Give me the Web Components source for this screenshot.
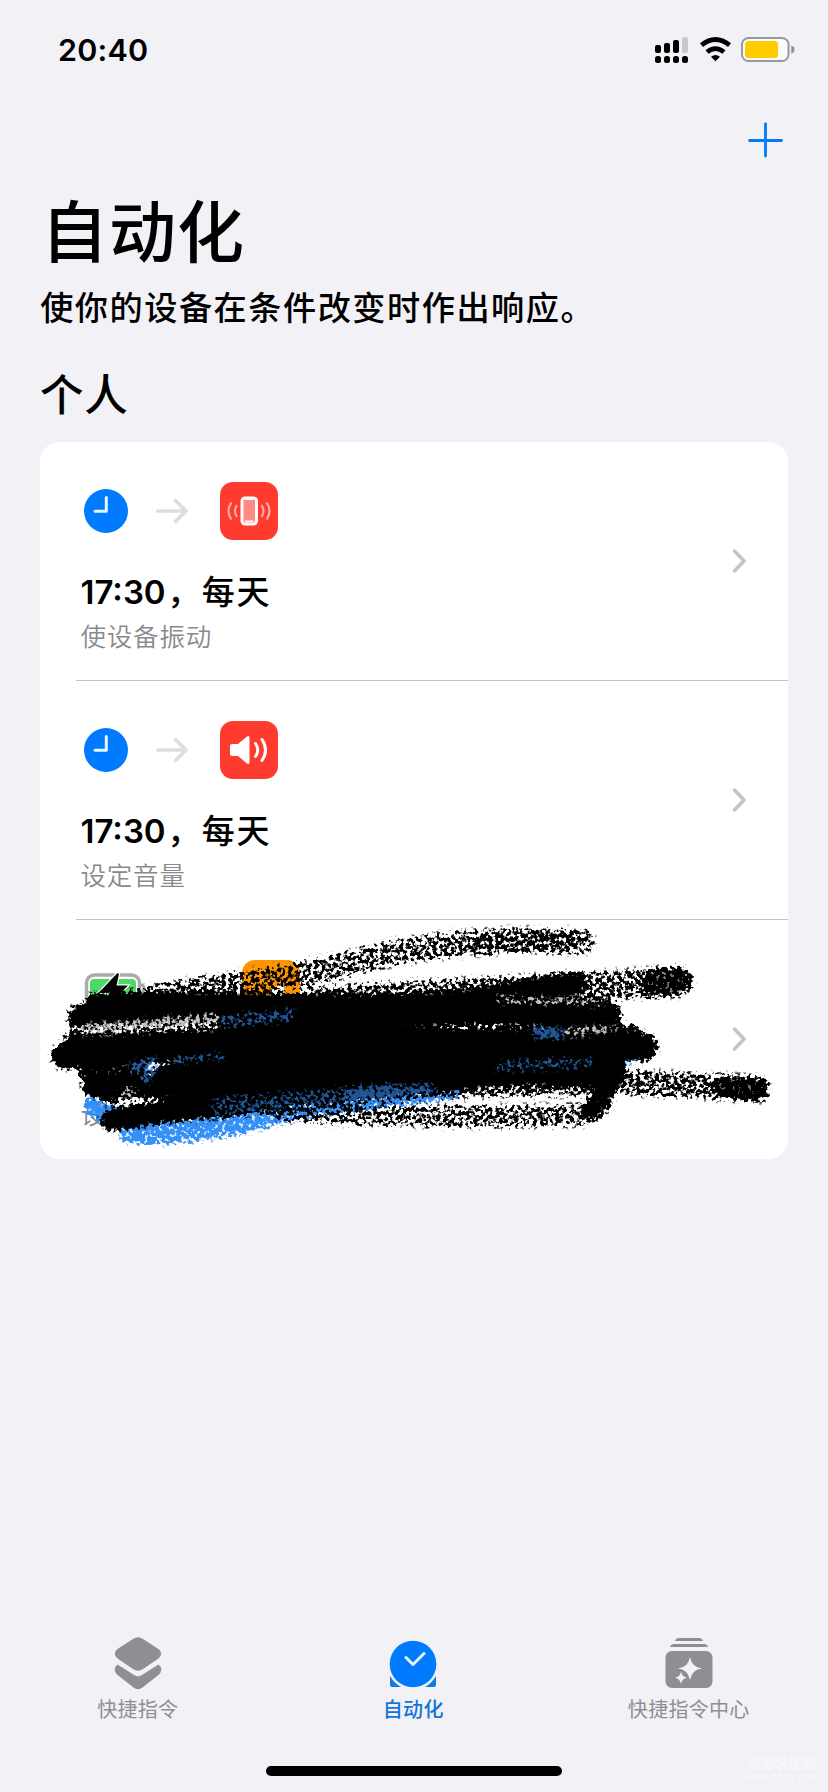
<!DOCTYPE html>
<html lang="zh-CN">
<head>
<meta charset="utf-8">
<title>自动化</title>
<style>
body{margin:0;background:#f1f1f6}
</style>
</head>
<body>
<shortcuts-screen></shortcuts-screen>
<script>
function define(name, html){
  const template=document.createElement('template');
  template.innerHTML=html;
  customElements.define(name,class extends HTMLElement{
    constructor(){super();this.attachShadow({mode:'open'}).append(template.content.cloneNode(true));}
  });
}

define('status-bar',`
<style>
:host{display:flex;height:98px;box-sizing:border-box;padding:0 33px 0 58px;align-items:center;justify-content:space-between}
time{font:600 30.5px/36px Inter,sans-serif;letter-spacing:.2px;margin-top:1px}
svg{display:block;width:142px;height:30px}
</style>
<time>20:40</time>
<svg viewBox="653 34 142 30">
  <g fill="#000"><rect x="655" y="45" width="6" height="8" rx="2"/><rect x="664" y="43" width="6" height="10" rx="2"/><rect x="673" y="40" width="6" height="13" rx="2"/>
  <rect x="655" y="56" width="6" height="7" rx="2.5"/><rect x="664" y="56" width="6" height="7" rx="2.5"/><rect x="673" y="56" width="6" height="7" rx="2.5"/><rect x="682" y="56" width="6" height="7" rx="2.5"/></g>
  <rect x="682" y="37" width="6" height="16" rx="2" fill="#c8c8cc"/>
  <path d="M701.5 45.200Q715.5 33.800 729.5 45.200M707 52Q715.5 45.200 724 52" fill="none" stroke="#000" stroke-width="4.800"/>
  <path d="M711 56.700Q715.5 53.200 720 56.700L715.5 61.200Z"/>
  <rect x="742" y="38" width="46.500" height="23" rx="6.500" fill="#fbfbfd" stroke="#98989d" stroke-width="2"/>
  <rect x="745" y="41" width="33" height="17" rx="3.500" fill="#fc0"/>
  <path d="M791.300 45.500Q794.500 46.500 794.500 49.500T791.300 53.500Z" fill="#8e8e93"/>
</svg>`);

define('nav-bar',`
<style>
:host{display:flex;height:84px;box-sizing:border-box;padding:24px 44px 0;justify-content:flex-end}
svg{width:36px;height:36px;display:block}
</style>
<svg viewBox="0 0 36 36"><path d="M17.500 1.800V34M1.500 18.500H33.500" stroke="#007aff" stroke-width="2.800" stroke-linecap="round"/></svg>`);

define('page-heading',`
<style>
:host{display:block;padding:0 40px;height:260px;box-sizing:border-box;font-family:"Noto Sans CJK SC",sans-serif;color:#000}
h1,h2,p{margin:0;font-weight:500;white-space:nowrap}
h1{font-size:67px;line-height:98px;letter-spacing:1px;padding-left:1px;margin-top:-3px}
p{font-size:33.200px;line-height:50px;letter-spacing:1.500px;padding:4px 0 0 .2px}
h2{font-size:43.500px;line-height:64px;padding-top:30px;letter-spacing:.8px}
</style>
<h1><slot name="title"></slot></h1><p><slot name="summary"></slot></p><h2><slot name="section"></slot></h2>`);

define('clock-icon',`
<style>:host{display:block;width:44px;height:44px}svg{display:block}</style>
<svg width="44" height="44"><circle cx="22" cy="22" r="22" fill="#007aff"/><path d="M22.300 8.500V22.300H11" fill="none" stroke="#e9f8ff" stroke-width="3" stroke-linecap="round" stroke-linejoin="round"/></svg>`);

define('arrow-icon',`
<style>:host{display:block;width:34px;height:28px}svg{display:block}</style>
<svg width="34" height="28"><path d="M3 14H31M20.500 3.500L31 14L20.500 24.500" fill="none" stroke="#dedede" stroke-width="3.700" stroke-linecap="round" stroke-linejoin="round"/></svg>`);

define('app-tile',`
<style>:host{display:block;width:58px;height:58px;border-radius:13px;background:var(--tile,#ff3b30)}</style><slot></slot>`);

define('automation-row',`
<style>
:host{display:flex;position:relative;height:239px;box-sizing:border-box;padding-left:36px}
.body{flex:1;display:flex;flex-direction:column;padding:39px 0 0 5px;border-bottom:1px solid var(--line,#c4c4c7);font-family:Inter,"Noto Sans CJK SC",sans-serif;box-sizing:border-box}
.flow{display:flex;height:60px;align-items:center;padding-left:3px}
.flow ::slotted(arrow-icon){margin-left:27px;margin-right:31px}
.name{display:flex;font-size:33px;line-height:46px;height:46px;font-weight:600;margin-top:28px;margin-left:-.5px;white-space:nowrap;font-family:Inter,"Noto Sans CJK SC",sans-serif}
.name ::slotted([slot=when]){font-weight:500;letter-spacing:1.700px;margin:-2px 0 0 1.500px;font-family:"Noto Sans CJK SC",sans-serif}
.detail{font-size:25.500px;line-height:36px;color:#8a8a8e;margin-top:2px;margin-left:-.5px;letter-spacing:.8px;font-weight:350;font-family:"Noto Sans CJK SC",sans-serif}
.chevron{align-self:center;width:20px;height:28px;margin-right:38px}
.end{display:flex;border-bottom:1px solid var(--line,#c4c4c7)}
</style>
<div class="body"><div class="flow"><slot name="flow"></slot></div><div class="name"><slot name="name"></slot><slot name="when"></slot></div><div class="detail"><slot name="detail"></slot></div></div>
<div class="end"><svg class="chevron" viewBox="0 0 20 28"><path d="M4.500 4L14 14L4.500 24" fill="none" stroke="#c4c4c6" stroke-width="3.500" stroke-linecap="round" stroke-linejoin="round"/></svg></div>
<slot name="overlay"></slot>`);

define('automation-card',`
<style>:host{display:block;margin:0 40px;height:717px;border-radius:20px;background:#fff;overflow:hidden}</style><slot></slot>`);

define('charging-icon',`
<style>:host{display:block;width:62px;height:36px;margin-right:96px}svg{display:block;position:relative;top:2px}</style>
<svg width="62" height="36"><rect x="2.500" y="2" width="53" height="32" rx="8" fill="#fff" stroke="#aaa" stroke-width="3.500"/><rect x="6" y="6" width="46" height="24" rx="4" fill="#4cd964"/><path d="M58 11Q62 15 58 20" fill="none" stroke="#aaa" stroke-width="3"/><path d="M33.500 0L15 19.500H26L22 34L44 12.500H32.500L35 1Z" fill="#000" stroke="#fff" stroke-width="2.500" paint-order="stroke"/></svg>`);

/* Chalky marker strokes: line opacity is the density of the grain. */
define('marker-scribble',`
<style>:host{display:block;position:absolute;inset:0}svg{display:block}</style>
<svg width="748" height="239" viewBox="40 919 748 239" fill="none" stroke-linecap="round" stroke-linejoin="round">
<defs>
<filter id="grain" filterUnits="userSpaceOnUse" x="40" y="919" width="748" height="239" color-interpolation-filters="sRGB">
<feGaussianBlur in="SourceGraphic" stdDeviation="2.400" result="soft"/>
<feTurbulence type="fractalNoise" baseFrequency=".27" numOctaves="2" seed="8"/>
<feColorMatrix values="0 0 0 0 0  0 0 0 0 0  0 0 0 0 0  2.8 0 0 0 -.9" result="noise"/>
<feComposite in="soft" in2="noise" operator="arithmetic" k2="4.100" k3="3" k4="-3" result="cut"/>
<feGaussianBlur in="cut" stdDeviation=".5" result="cut2"/>
<feFlood flood-color="#000"/><feComposite in2="cut2" operator="in"/>
</filter>
<filter id="blue" filterUnits="userSpaceOnUse" x="40" y="919" width="748" height="239" color-interpolation-filters="sRGB">
<feGaussianBlur in="SourceGraphic" stdDeviation="2.500" result="soft"/>
<feTurbulence type="fractalNoise" baseFrequency=".27" numOctaves="2" seed="21"/>
<feColorMatrix values="0 0 0 0 0  0 0 0 0 0  0 0 0 0 0  2.800 0 0 0 -.9" result="noise"/>
<feComposite in="soft" in2="noise" operator="arithmetic" k2="3.200" k3="2.500" k4="-2.500" result="cut"/>
<feGaussianBlur in="cut" stdDeviation=".5" result="cut2"/>
<feFlood flood-color="#348ff6"/><feComposite in2="cut2" operator="in"/>
</filter>
<filter id="light" filterUnits="userSpaceOnUse" x="40" y="919" width="748" height="239" color-interpolation-filters="sRGB">
<feGaussianBlur in="SourceGraphic" stdDeviation="2.500" result="soft"/>
<feTurbulence type="fractalNoise" baseFrequency=".27" numOctaves="2" seed="5"/>
<feColorMatrix values="0 0 0 0 0  0 0 0 0 0  0 0 0 0 0  2.800 0 0 0 -.9" result="noise"/>
<feComposite in="soft" in2="noise" operator="arithmetic" k2="3.300" k3="2.500" k4="-2.500" result="cut"/>
<feFlood flood-color="#fff"/><feComposite in2="cut" operator="in"/>
</filter>
</defs>
<g stroke="#000" filter="url(#blue)">
<path d="M92 1104Q102 1115 112 1112" stroke-width="17"/>
<path d="M131 1130C178 1134 230 1124 275 1112S370 1098 450 1086" stroke-width="25" stroke-opacity=".85"/>
<path d="M622 1058L640 1045" stroke-width="15"/>
</g>
<g stroke="#000" filter="url(#grain)">
<path d="M132 1002C190 986 260 984 340 965C390 951 420 946 480 941S550 942 582 940" stroke-width="25" stroke-opacity=".52"/>
<path d="M480 944C510 940 540 942 568 940" stroke-width="20" stroke-opacity=".25"/>
<path d="M310 1002C410 992 500 992 590 986S650 982 678 980" stroke-width="30" stroke-opacity=".55"/>
<path d="M655 982L678 980" stroke-width="27" stroke-opacity=".7"/>
<path d="M75 1031L180 1025Q350 1021 440 1013" stroke-width="22" stroke-opacity=".5"/>
<path d="M96 1002C170 1000 250 1002 355 1004" stroke-width="20"/>
<path d="M79 1015C180 1010 280 1008 390 1005S500 990 574 982" stroke-width="22"/>
<path d="M230 1022Q400 1005 608 1014" stroke-width="26"/>
<path d="M430 1001Q520 998 595 1006" stroke-width="20" stroke-opacity=".62"/>
<path d="M65 1055C200 1042 350 1038 480 1042S590 1044 644 1046" stroke-width="27"/>
<path d="M74 1043C180 1043 330 1030 470 1037L632 1034" stroke-width="21" stroke-opacity=".85"/>
<path d="M92 1073Q100 1060 138 1068L110 1091" stroke-width="25" stroke-opacity=".88"/>
<path d="M165 1077C280 1059 450 1055 612 1067" stroke-width="28"/>
<path d="M94 1085C210 1088 320 1086 450 1078Q550 1067 612 1078" stroke-width="23"/>
<path d="M112 1119C150 1110 210 1107 280 1098" stroke-width="23"/>
<path d="M185 1080Q250 1100 350 1090L485 1072" stroke-width="22" stroke-opacity=".85"/>
<path d="M330 1092Q480 1086 606 1086" stroke-width="18" stroke-opacity=".58"/>
<path d="M280 1109C370 1115 480 1117 580 1114Q609 1107 604 1079" stroke-width="22" stroke-opacity=".52"/>
<path d="M604 1077Q607 1099 591 1109" stroke-width="19" stroke-opacity=".9"/>
<path d="M608 1080C650 1083 690 1084 757 1088" stroke-width="25" stroke-opacity=".57"/>
<path d="M725 1086L757 1089" stroke-width="24" stroke-opacity=".7"/>
</g>
<g stroke="#000" filter="url(#light)" opacity=".75">
<path d="M85 1028L150 1023L215 1018" stroke-width="10" stroke-opacity=".68"/>
<path d="M500 998L600 1001" stroke-width="8" stroke-opacity=".5"/>
<path d="M567 1032L612 1028" stroke-width="7" stroke-opacity=".65"/>
<path d="M125 1091L132 1092" stroke-width="11" stroke-opacity=".5"/>
</g>
<g stroke="#000" filter="url(#blue)" opacity=".6">
<path d="M224 1021L290 1014" stroke-width="13" stroke-opacity=".5"/>
<path d="M134 1065L154 1062L146 1078" stroke-width="11" stroke-opacity=".65"/>
<path d="M175 1059L220 1056" stroke-width="8" stroke-opacity=".5"/>
<path d="M537 1032H559" stroke-width="11" stroke-opacity=".9"/>
<path d="M500 1066L588 1061" stroke-width="12" stroke-opacity=".45"/>
<path d="M220 1105L290 1100L390 1090" stroke-width="18" stroke-opacity=".45"/>
<path d="M350 1095L430 1087" stroke-width="10" stroke-opacity=".72"/>
</g></svg>`);

define('tab-item',`
<style>:host{width:275.500px;display:flex;flex-direction:column;align-items:center;color:#8e8e93;font:400 20px/30px "Noto Sans CJK SC",sans-serif;letter-spacing:.3px}
:host([active]){color:#1176d7;font-weight:500}
::slotted(svg){display:block;width:56px;height:56px}.label{margin-top:2px}</style>
<slot name="icon"></slot><span class="label"><slot></slot></span>`);

define('tab-bar',`
<style>:host{display:flex;width:828px;height:118px}</style><slot></slot>`);

define('home-indicator',`
<style>:host{display:flex;position:relative;height:38px;justify-content:center}i{display:block;width:296px;height:10px;border-radius:5px;background:#000;margin-top:12px}
.mark{position:absolute;right:9px;top:-1px;color:#f9f9fd;text-align:center;font:400 14px/18px "Noto Sans CJK SC",sans-serif}.mark small{display:block;font:10px/13px "Liberation Sans",sans-serif;letter-spacing:.6px}</style>
<i></i><div class="mark">电脑装配网<small>www.dnzp.com</small></div>`);

define('shortcuts-screen',`
<style>
:host{display:flex;flex-direction:column;width:828px;height:1792px;background:#f1f1f6;color:#000}
.space{flex:1}
.glyph{display:block}
marker-scribble{z-index:1}
</style>
<status-bar></status-bar><nav-bar></nav-bar>
<page-heading><span slot="title">自动化</span><span slot="summary">使你的设备在条件改变时作出响应。</span><span slot="section">个人</span></page-heading>
<automation-card>
<automation-row>
 <clock-icon slot="flow"></clock-icon><arrow-icon slot="flow"></arrow-icon>
 <app-tile slot="flow"><svg class="glyph" width="58" height="58" fill="none"><rect x="22" y="16" width="14.500" height="26" rx="3" fill="#ff8a84" stroke="#fff" stroke-width="3"/><path d="M25 16H33V18H25ZM25 38.500H33.500V40H25Z" fill="#fff"/><path d="M17 23Q13 29 17 35M11.500 20.500Q5.500 29 11.500 37.500M41.500 23Q45.500 29 41.500 35M46.500 20.500Q52.500 29 46.500 37.500" stroke="#ffaaa5" stroke-width="2.200"/></svg></app-tile>
 <span slot="name">17:30</span><span slot="when">，每天</span><span slot="detail">使设备振动</span>
</automation-row>
<automation-row>
 <clock-icon slot="flow"></clock-icon><arrow-icon slot="flow"></arrow-icon>
 <app-tile slot="flow"><svg class="glyph" width="58" height="58" fill="none"><path d="M12 23H18L27 15.500Q29.500 14 29.500 17V41Q29.500 44 27 42.500L18 35H12Q10 35 10 33V25Q10 23 12 23Z" fill="#fff"/><path d="M35.500 22.500Q40 29 35.500 35.500M42 18.500Q49 29 42 39.500" stroke="#fff" stroke-width="3" stroke-linecap="round"/></svg></app-tile>
 <span slot="name">17:30</span><span slot="when">，每天</span><span slot="detail">设定音量</span>
</automation-row>
<automation-row style="--line:transparent">
 <charging-icon slot="flow"></charging-icon><app-tile slot="flow" style="--tile:#ff9500"><svg class="glyph" width="58" height="58"><path d="M28 30L42 23V42H28Z" fill="#fff"/></svg></app-tile>
 <span slot="detail">设</span>
 <marker-scribble slot="overlay"></marker-scribble>
</automation-row>
</automation-card>
<div class="space"></div>
<tab-bar>
<tab-item><svg slot="icon" viewBox="0 0 56 56" fill="#8e8e93"><path d="M7.500 27.500L24.500 38.300Q28 40.500 31.500 38.300L48.500 27.500Q54 32 49 37.500L32.500 50.500Q28 54 23.500 50.500L7 37.500Q2 32 7.500 27.500Z" transform="translate(0 1)"/><path d="M23 3Q28 -.5 33 3L48.500 13Q54 17.500 48.500 22.500L33 33Q28 36.500 23 33L7.500 22.500Q2 17.500 7.500 13Z"/></svg>快捷指令</tab-item>
<tab-item active><svg slot="icon" viewBox="0 0 56 56"><path d="M5 40V49Q5 51 7 51H16Q9 47 5 40ZM51 40V49Q51 51 49 51H40Q47 47 51 40Z" fill="#1478de"/><circle cx="28" cy="28" r="23.300" fill="#007aff"/><path d="M21 21.500L28 28.500L39 17.500" fill="none" stroke="#e9f8ff" stroke-width="3" stroke-linecap="round" stroke-linejoin="round"/></svg>自动化</tab-item>
<tab-item><svg slot="icon" viewBox="0 0 56 56"><path d="M14 5Q15 2 18 2H38Q41 2 42 5ZM9 11Q10 8 13 8H43Q46 8 47 11Z" fill="#8e8e93"/><rect x="4.500" y="15" width="47" height="37" rx="6.500" fill="#8e8e93"/><path d="M29 21Q31 31.500 41 32.500Q31 33.500 29 44Q27 33.500 17 32.500Q27 31.500 29 21ZM20 35.500Q21 41 26 41.700Q21 42.500 20 48Q19 42.500 14 41.700Q19 41 20 35.500Z" fill="#f1f1f6"/></svg>快捷指令中心</tab-item>
</tab-bar>
<home-indicator></home-indicator>`);
</script>
</body>
</html>
